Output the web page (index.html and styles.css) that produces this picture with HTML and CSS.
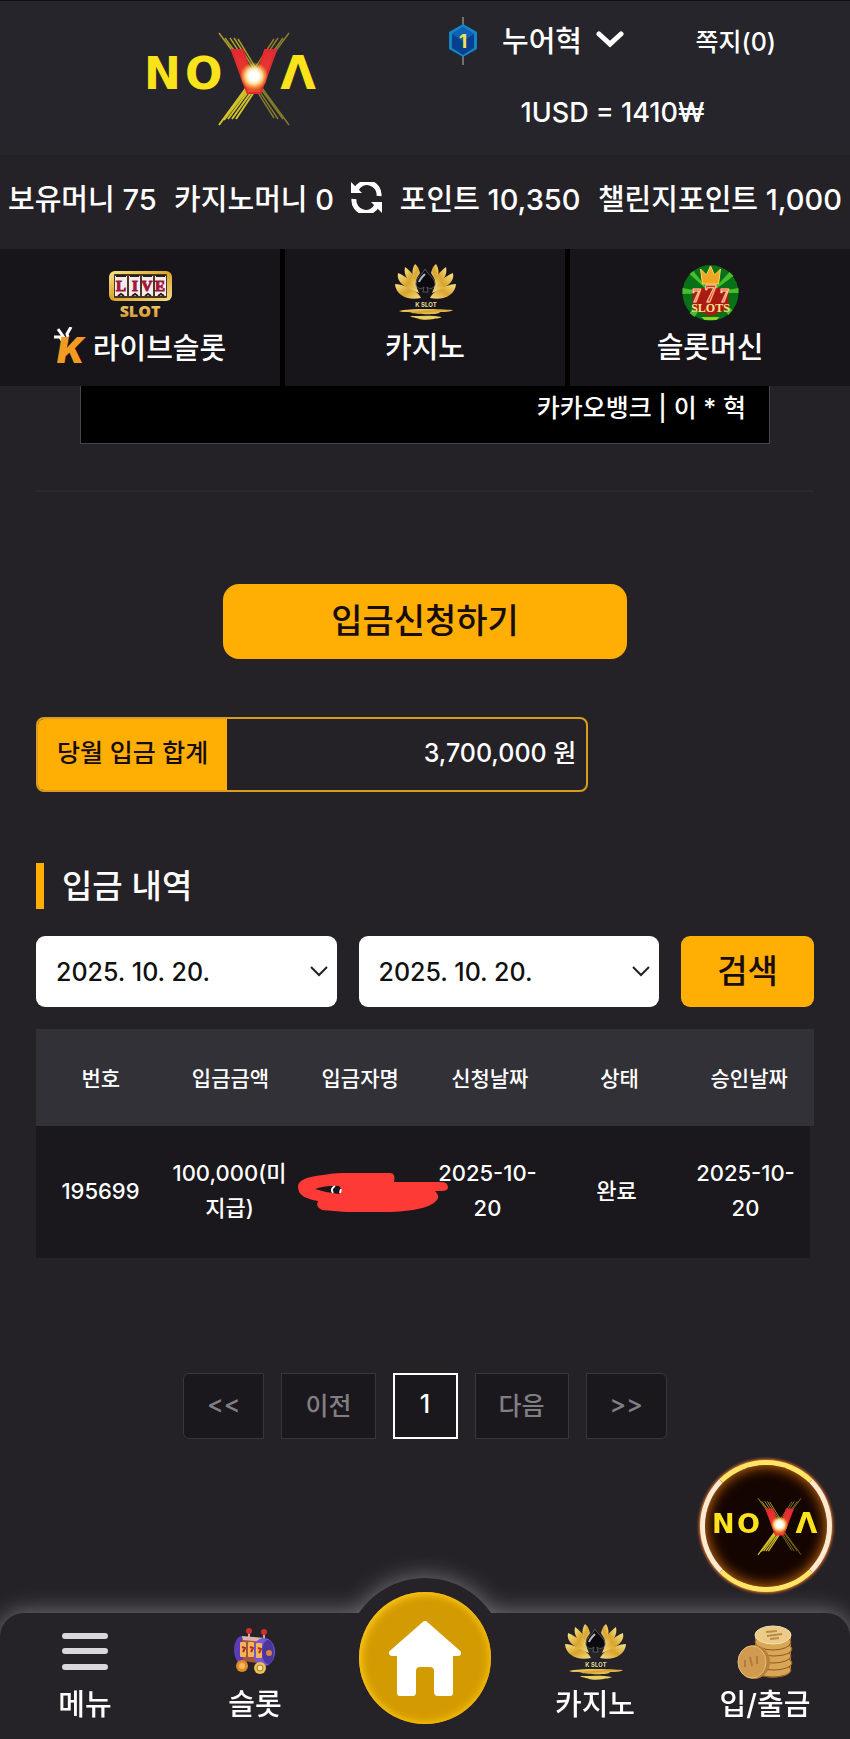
FILE: index.html
```html
<!DOCTYPE html>
<html lang="ko">
<head>
  <meta charset="UTF-8" />
  <meta name="viewport" content="width=device-width, initial-scale=1" />
  <title>NOVA - 입금신청</title>
  <link rel="stylesheet" href="styles.css">
</head>
<body>
  <header class="header">
    <div class="header-top">
      <a href="#" class="logo" aria-label="NOVA">
        <svg viewBox="0 0 172 96">
          <defs>
            <linearGradient id="redDown" x1="0" y1="0" x2="0" y2="1">
              <stop offset="0" stop-color="#e01f35" />
              <stop offset="1" stop-color="#ee5a2a" />
            </linearGradient>
            <radialGradient id="flare">
              <stop offset="0.35" stop-color="#ffffff" />
              <stop offset="0.6" stop-color="#ffe9a0" stop-opacity="0.9" />
              <stop offset="1" stop-color="#ffd400" stop-opacity="0" />
            </radialGradient>
          </defs>
          <g id="logo">
            <g fill="none" stroke="#a89c2c" stroke-width="1.5">
              <path d="M73 2L110 52M79 7L112 52M84 7L114 52M88 7L117 52M92 8L119 52" />
              <path d="M143 2L106 52M137 7L104 52M132 7L102 52M128 8L99 52" opacity="0.75" />
              <path d="M143 94L108 46M137 88L106 46M132 88L104 46M128 87L102 46" opacity="0.7" />
            </g>
            <path d="M73 94L108 46M78 89L111 46M82 88L113 46M86 88L116 46M90 88L118 46" stroke="#d2c22a" stroke-width="2" />
            <g class="logo-text">
              <text x="-2" y="58" font-size="44">N</text>
              <text x="39" y="58" font-size="44">O</text>
              <text x="152" y="58" font-size="46" text-anchor="middle">Λ</text>
              <text x="108" y="62" font-size="58" fill="url(#redDown)" stroke="#e22a32" stroke-width="2" text-anchor="middle">V</text>
            </g>
            <circle cx="108" cy="45" r="14" fill="url(#flare)" />
          </g>
        </svg>
      </a>
      <div class="account">
        <div class="account-row">
          <svg class="badge" viewBox="0 0 28 48" aria-hidden="true">
            <path d="M14 0V48" stroke="#8d8a80" stroke-width="1.5" />
            <path d="M14 7L28 15V32L14 40L0 32V15Z" fill="#1583c4" />
            <path d="M14 10L25 17V31L14 38L3 31V17Z" fill="#06408f" />
            <path d="M14 10L25 17L14 24L3 17Z" fill="#0c63b4" />
            <text x="14" y="31" font-size="19" font-weight="bold" text-anchor="middle" fill="#f7e04a">1</text>
          </svg>
          <button class="user-name">누어혁
            <svg viewBox="0 0 28 17" aria-hidden="true"><path d="M3 3L14 13L25 3" fill="none" stroke="#fff" stroke-width="5" stroke-linecap="round" /></svg>
          </button>
          <a href="#" class="note">쪽지(0)</a>
        </div>
        <p class="rate">1USD = 1410₩</p>
      </div>
    </div>

    <div class="balance">
      <span>보유머니 75</span>
      <span>카지노머니 0</span>
      <button aria-label="새로고침">
        <svg viewBox="0 0 31 31" aria-hidden="true">
          <g id="arrow">
            <path d="M0 0V11H11Z" fill="#fff" />
            <path d="M5 8A12 12 0 0 1 28 14" fill="none" stroke="#fff" stroke-width="5" />
          </g>
          <use href="#arrow" transform="rotate(180 15.5 15.5)" />
        </svg>
      </button>
      <span>포인트 10,350</span>
      <span>챌린지포인트 1,000</span>
    </div>

    <nav class="games">
      <a href="#">
        <svg class="live-icon" viewBox="0 0 63 47" aria-hidden="true">
          <defs>
            <linearGradient id="goldDown" x1="0" y1="0" x2="0" y2="1">
              <stop offset="0" stop-color="#f7d978" />
              <stop offset="1" stop-color="#d08a24" />
            </linearGradient>
          </defs>
          <rect width="63" height="30" rx="6" fill="url(#gold)" />
          <rect x="5" y="3" width="53" height="24" rx="1" fill="#4a3523" />
          <g fill="#f3ecec">
            <rect x="6" y="5" width="12" height="20" /><rect x="20" y="5" width="11" height="20" />
            <rect x="33" y="5" width="11" height="20" /><rect x="46" y="5" width="11" height="20" />
          </g>
          <path d="M7 5H17M21 5H30M34 5H43M47 5H56M9 25L12 23L15 25M23 25L26 23L29 25M36 25L39 23L42 25M49 25L52 23L55 25" fill="none" stroke="#2b1d18" stroke-width="2" />
          <g class="live-text">
            <text x="12" y="20">L</text><text x="26" y="20">I</text><text x="38" y="20">V</text><text x="51" y="20">E</text>
          </g>
          <text x="31" y="46" class="slot-text">SLOT</text>
        </svg>
        <span>
          <svg class="k-icon" viewBox="0 0 35 37" aria-hidden="true">
            <path d="M0 10L6 10L9 15M4 2L11 12M17 0L13 7L14 10" fill="none" stroke="#fff" stroke-width="3" />
            <text x="3" y="36" font-size="36" font-weight="900" font-style="italic" fill="#f39a20">K</text>
          </svg>라이브슬롯
        </span>
      </a>
      <a href="#">
        <svg class="lotus-icon" viewBox="0 0 61 58" aria-hidden="true">
          <defs>
            <linearGradient id="gold" x1="0" y1="0" x2="1" y2="1">
              <stop offset="0" stop-color="#f6e58a" />
              <stop offset="0.5" stop-color="#d9a32c" />
              <stop offset="1" stop-color="#f3e08a" />
            </linearGradient>
          </defs>
          <g id="lotus">
            <g id="petals" fill="url(#gold)">
              <path d="M0 20C1 31 12 37 26 34C23 27 12 21 0 20Z" />
              <path d="M3 9C1 18 9 23 24 29C21 19 12 13 3 9Z" />
              <path d="M10 3C8 12 14 18 22 24C23 15 17 8 10 3Z" />
              <path d="M20 0C16 6 17 13 21 18C21 14 24 11 25 9C24 5 23 2 20 0Z" />
            </g>
            <use href="#petals" transform="matrix(-1 0 0 1 61 0)" />
            <path d="M30 5C27 11 21 14 21 20C21 24 26 26 29 23L28 28H33L32 23C35 26 40 24 40 20C40 14 33 11 30 5Z" fill="#0b0b0f" stroke="#55555d" stroke-width="1" />
            <path d="M24 18C25 15 28 12 30 10" stroke="#b8b8c4" stroke-width="2" fill="none" />
            <text x="31" y="43" class="lotus-text">K SLOT</text>
            <path d="M4 47C15 44 46 45 58 46C54 49 44 47 44 49C40 51 20 50 17 49C16 47 8 49 4 47Z" fill="url(#gold)" />
            <path d="M15 52C26 52 38 51 47 53C44 55 40 54 39 55C34 56 27 56 24 55C24 54 18 54 15 52Z" fill="#e8cf60" />
          </g>
        </svg>
        <span>카지노</span>
      </a>
      <a href="#">
        <svg class="lotus-icon" viewBox="0 0 58 58" aria-hidden="true">
          <circle cx="29" cy="29" r="28" fill="#087016" />
          <path d="M29 29L8 10L12 7ZM29 29L1 24L1 30ZM29 29L48 8L52 12ZM29 29L57 24V29ZM29 29L8 49L13 53ZM29 29L47 51L51 46Z" fill="#49bd2c" />
          <path d="M21 20L19 5L25 11L29 2L33 11L39 5L37 20Z" fill="#f2a423" stroke="#ffd85a" stroke-width="1" />
          <path d="M11 24H47V45L29 52L11 45Z" fill="#a91b12" />
          <g class="seven-text">
            <text x="15" y="38" font-size="18">7</text><text x="43" y="38" font-size="18">7</text>
            <text x="29" y="38" font-size="25">7</text>
          </g>
          <text x="29" y="48" class="slots-text">SLOTS</text>
          <path d="M20 53H38L35 56H23Z" fill="#8ed02b" />
        </svg>
        <span>슬롯머신</span>
      </a>
    </nav>
  </header>

  <main>
    <div class="bank-box">카카오뱅크 | 이 * 혁</div>
    <hr>

    <button class="deposit-btn">입금신청하기</button>

    <dl class="month-total">
      <dt>당월 입금 합계</dt>
      <dd>3,700,000 원</dd>
    </dl>

    <h2>입금 내역</h2>

    <form class="search">
      <label class="date">
        <input type="text" value="2025. 10. 20." aria-label="시작일">
        <svg viewBox="0 0 18 11" aria-hidden="true"><path d="M1 1L9 9L17 1" /></svg>
      </label>
      <label class="date">
        <input type="text" value="2025. 10. 20." aria-label="종료일">
        <svg viewBox="0 0 18 11" aria-hidden="true"><path d="M1 1L9 9L17 1" /></svg>
      </label>
      <button type="button">검색</button>
    </form>

    <table>
      <thead>
        <tr><th>번호</th><th>입금금액</th><th>입금자명</th><th>신청날짜</th><th>상태</th><th>승인날짜</th></tr>
      </thead>
      <tbody>
        <tr>
          <td>195699</td>
          <td>100,000(미지급)</td>
          <td class="masked">
            <svg viewBox="0 0 150 40" aria-hidden="true">
              <path d="M0 14C0 7 8 4 25 2Q35 0 45 0H92Q98 0 96 9H144Q150 9 150 15Q149 18 144 18H137Q141 22 140 25C137 33 120 38 92 39H48L24 37Q17 34 20 28C9 26 0 23 0 14Z" fill="#fd3a36" />
              <path d="M17 16Q30 12 41 13L44 17L41 21Q29 20 17 16Z" fill="#1a171b" />
              <path d="M37 13Q32 16 35 20M43 16L42 20" fill="none" stroke="#fff" stroke-width="2" />
            </svg>
          </td>
          <td>2025-10-<wbr>20</td>
          <td>완료</td>
          <td>2025-10-<wbr>20</td>
        </tr>
      </tbody>
    </table>

    <div class="pages">
      <button>&lt;&lt;</button>
      <button>이전</button>
      <button class="active">1</button>
      <button>다음</button>
      <button>&gt;&gt;</button>
    </div>
  </main>

  <a href="#" class="floating" aria-label="NOVA"><svg viewBox="0 0 172 96"><use href="#logo" /></svg></a>

  <nav class="bottom-nav">
    <a href="#">
      <svg viewBox="0 0 56 56" aria-hidden="true"><path d="M8 12H48M8 27H48M8 43H48" stroke="#d9d6dd" stroke-width="6" stroke-linecap="round" /></svg>
      <span>메뉴</span>
    </a>
    <a href="#">
      <svg viewBox="0 0 56 56" aria-hidden="true">
        <path d="M22 8V18M37 9V19" stroke="#c9a9a0" stroke-width="2" />
        <circle cx="22" cy="7" r="3" fill="#cf2f2c" /><circle cx="37" cy="8" r="3" fill="#cf2f2c" />
        <ellipse cx="15" cy="26" rx="8" ry="14" fill="#5b3bb8" />
        <path d="M15 13L37 15V40L16 37Z" fill="#a4553c" />
        <path d="M15 12L38 14V18L16 16Z" fill="#d8b5b0" />
        <ellipse cx="37" cy="28" rx="11" ry="14" fill="#7458d4" />
        <ellipse cx="41" cy="28" rx="6" ry="12" fill="#4b35a0" />
        <circle cx="42" cy="29" r="3" fill="#d9823a" />
        <g fill="#f4b45c"><rect x="13" y="18" width="6" height="15" rx="1" /><rect x="21" y="18" width="6" height="15" rx="1" /><rect x="29" y="19" width="6" height="15" rx="1" /></g>
        <path d="M15 23L18 24L16 28M23 23L26 24L24 28M31 24L34 25L32 29" fill="none" stroke="#a8301f" stroke-width="2" />
        <circle cx="15" cy="42" r="6" fill="#e08a2c" /><circle cx="15" cy="42" r="3" fill="#f5b95e" />
        <circle cx="33" cy="44" r="6" fill="#f0bf52" /><circle cx="33" cy="44" r="3" fill="#fbe9a6" stroke="#a97724" />
      </svg>
      <span>슬롯</span>
    </a>
    <a href="#" class="home" aria-label="홈">
      <span class="home-circle">
        <svg viewBox="0 0 74 75" aria-hidden="true">
          <path d="M37 3L4 32H70Z" fill="#fff" stroke="#fff" stroke-width="6" stroke-linejoin="round" />
          <path d="M9 30H65V72Q65 75 62 75H50Q46 75 46 71V50Q46 46 42 46H32Q28 46 28 50V71Q28 75 25 75H12Q9 75 9 72Z" fill="#fff" />
        </svg>
      </span>
    </a>
    <a href="#">
      <svg class="lotus-icon" viewBox="0 0 61 56" aria-hidden="true"><use href="#lotus" /></svg>
      <span>카지노</span>
    </a>
    <a href="#">
      <svg viewBox="0 0 56 56" aria-hidden="true">
        <path d="M18 10V46C18 56 54 56 54 46V10Z" fill="#c48a3c" />
        <g fill="#d9a655" stroke="#8a5a24" stroke-width="1">
          <ellipse cx="36" cy="46" rx="18" ry="7" /><ellipse cx="37" cy="39" rx="18" ry="7" />
          <ellipse cx="36" cy="32" rx="18" ry="7" /><ellipse cx="37" cy="25" rx="18" ry="7" />
          <ellipse cx="36" cy="18" rx="18" ry="8" />
        </g>
        <ellipse cx="36" cy="11" rx="18" ry="9" fill="#ecca88" stroke="#f6e2b0" stroke-width="1" />
        <path d="M29 8L40 7M30 12L45 10M33 15L42 14" stroke="#b98b45" stroke-width="2" />
        <ellipse cx="17" cy="38" rx="16" ry="17" fill="#b9803a" />
        <ellipse cx="15" cy="38" rx="14" ry="16" fill="#d09a50" stroke="#e6bd7c" stroke-width="1" />
        <path d="M8 36V43M13 33L15 42M20 32V40" fill="none" stroke="#b07c3e" stroke-width="2" />
      </svg>
      <span>입/출금</span>
    </a>
  </nav>
</body>
</html>
```

FILE: styles.css
```css
* {
  margin: 0;
  padding: 0;
  box-sizing: border-box;
}

body {
  display: flex;
  flex-direction: column;
  min-height: 100vh;
  background: #252227;
  color: #fff;
  font-family: Inter, 'Noto Sans CJK KR', sans-serif;
  font-weight: 500;
  font-size: 25px;
}

a {
  color: inherit;
  text-decoration: none;
}

button,
input {
  border: none;
  background: none;
  color: inherit;
  font: inherit;
}

button {
  cursor: pointer;
}

svg {
  display: block;
  flex: none;
}

.logo-text {
  fill: #fbe31c;
  font-family: 'DejaVu Sans', sans-serif;
  font-weight: bold;
}

.lotus-text {
  font-size: 6px;
  font-weight: bold;
  text-anchor: middle;
  fill: #e6dca0;
}

/* header */
.header-top {
  display: flex;
  align-items: flex-start;
  height: 155px;
  padding-left: 146px;
  background: #26252b;
  border-top: 1px solid #111014;
}

.logo svg {
  width: 172px;
  height: 96px;
  margin-top: 30px;
}

.account {
  flex: 1;
  padding: 16px 74px 0 131px;
}

.account-row {
  display: flex;
  align-items: center;
  height: 48px;
}

.badge {
  width: 28px;
  height: 48px;
}

.user-name {
  display: flex;
  align-items: center;
  gap: 14px;
  margin-left: 25px;
  padding-bottom: 4px;
  font-size: 29px;
}

.user-name svg {
  width: 28px;
  height: 17px;
}

.note {
  margin-left: auto;
  padding-bottom: 3px;
}

.rate {
  margin-top: 32px;
  font-size: 27px;
  line-height: 32px;
  text-align: center;
}

.balance {
  display: flex;
  align-items: center;
  justify-content: space-between;
  height: 94px;
  padding: 0 8px 10px;
  font-size: 29px;
  white-space: nowrap;
}

.balance svg {
  width: 31px;
  height: 31px;
}

.games {
  display: grid;
  grid-template-columns: repeat(3, 1fr);
  gap: 5px;
  background: #000;
}

.games a {
  display: flex;
  flex-direction: column;
  align-items: center;
  height: 137px;
  padding-top: 15px;
  background: #17141a;
  font-size: 29px;
  line-height: 42px;
}

.games a > span {
  display: flex;
  align-items: center;
  gap: 4px;
  margin-top: 5px;
}

.live-icon {
  width: 63px;
  height: 47px;
  margin: 7px 0 4px;
}

.lotus-icon {
  width: 61px;
  height: 58px;
}

.k-icon {
  width: 35px;
  height: 37px;
  margin-bottom: 6px;
}

.live-text {
  font-family: 'Liberation Serif', serif;
  font-size: 15px;
  font-weight: bold;
  text-anchor: middle;
  fill: #a3163a;
  stroke: #a3163a;
}

.slot-text {
  font-family: 'Open Sans', sans-serif;
  font-size: 16px;
  font-weight: 800;
  text-anchor: middle;
  fill: url(#goldDown);
}

.seven-text {
  font-family: 'Liberation Serif', serif;
  font-weight: bold;
  text-anchor: middle;
  fill: #e02818;
  stroke: #ffd9a0;
}

.slots-text {
  font-family: 'Liberation Serif', serif;
  font-size: 12px;
  font-weight: bold;
  text-anchor: middle;
  fill: #ffe08a;
}

/* content */
main {
  padding: 0 36px;
}

.bank-box {
  height: 58px;
  margin: 0 44px;
  padding: 0 23px;
  border: 1px solid #48464b;
  border-top: none;
  background: #000;
  line-height: 44px;
  text-align: right;
}

hr {
  margin: 46px 0 92px;
  border: none;
  border-top: 2px solid #2a292e;
}

.deposit-btn {
  display: block;
  width: 52%;
  height: 75px;
  margin: 0 auto 58px;
  padding-bottom: 6px;
  border-radius: 16px;
  background: #ffae04;
  color: #180c0c;
  font-size: 34px;
}

.month-total {
  display: flex;
  width: 71%;
  height: 75px;
  margin-bottom: 71px;
  border: 2px solid #d99c1c;
  border-radius: 8px;
  overflow: hidden;
  line-height: 69px;
}

.month-total dt {
  padding: 0 19px;
  background: #ffae04;
  color: #180c0c;
}

.month-total dd {
  flex: 1;
  padding-right: 10px;
  text-align: right;
}

h2 {
  margin-bottom: 27px;
  padding-left: 18px;
  border-left: 8px solid #ffae04;
  font-size: 33px;
  font-weight: 500;
  line-height: 46px;
}

.search {
  display: flex;
  gap: 22px;
  height: 71px;
  margin-bottom: 22px;
}

.date {
  display: flex;
  flex: 1;
  align-items: center;
  min-width: 0;
  padding: 0 9px 0 20px;
  border-radius: 9px;
  background: #fff;
}

.date input {
  flex: 1;
  min-width: 0;
  color: #111;
}

.date svg {
  width: 18px;
  height: 11px;
  fill: none;
  stroke: #222;
  stroke-width: 2;
}

.search button {
  width: 133px;
  padding-bottom: 6px;
  border-radius: 9px;
  background: #ffae04;
  color: #180c0c;
  font-size: 33px;
}

table,
thead,
tbody {
  display: block;
}

tr {
  display: table;
  width: 100%;
  table-layout: fixed;
  border-spacing: 0;
}

thead {
  background: #323138;
}

th {
  height: 97px;
  padding-bottom: 2px;
  font-size: 21px;
  font-weight: 500;
}

tbody {
  margin-right: 4px;
  background: #1a171d;
}

td {
  height: 132px;
  padding: 0 4px 2px;
  font-size: 22px;
  line-height: 35px;
  text-align: center;
}

.masked {
  position: relative;
}

.masked svg {
  position: absolute;
  top: 47px;
  left: 4px;
  width: 150px;
  height: 40px;
}

.pages {
  display: flex;
  justify-content: center;
  gap: 17px;
  margin: 115px 0 174px;
}

.pages button {
  min-width: 65px;
  height: 66px;
  padding: 0 23px 4px;
  border: 1px solid #38363b;
  background: #1a171d;
  color: #817f84;
}

.pages button:first-child {
  border-radius: 6px 0 0 6px;
}

.pages button:last-child {
  border-radius: 0 6px 6px 0;
}

.pages .active {
  border: 2px solid #fff;
  color: #fff;
}

/* round shortcut above the bottom bar */
.floating {
  position: fixed;
  right: 18px;
  bottom: 147px;
  z-index: 2;
  display: flex;
  align-items: center;
  justify-content: center;
  width: 132px;
  height: 132px;
  border: 5px solid #fff0b4;
  border-color: #ffe566 #ffe9d0;
  border-radius: 50%;
  background: #150500;
  box-shadow: inset 0 0 14px #e87a10, 0 0 3px 1px #e8762a;
}

.floating svg {
  width: 106px;
  height: 59px;
}

.bottom-nav {
  position: sticky;
  bottom: 0;
  display: grid;
  grid-template-columns: repeat(5, 1fr);
  height: 126px;
  margin-top: auto;
  border-radius: 24px 24px 0 0;
  background: #252327;
  filter: drop-shadow(0 0 12px rgba(255, 255, 255, 0.4));
}

.bottom-nav a {
  display: flex;
  flex-direction: column;
  align-items: center;
  padding-top: 11px;
  font-size: 29px;
  line-height: 42px;
}

.bottom-nav svg {
  width: 56px;
  height: 56px;
  margin-bottom: 4px;
}

.bottom-nav .lotus-icon {
  width: 61px;
}

/* home button rises over the bar */
.bottom-nav .home {
  position: absolute;
  top: -35px;
  left: 50%;
  width: 160px;
  height: 160px;
  margin-left: -80px;
  padding-top: 14px;
  border-radius: 50%;
  background: #252327;
}

.home + a {
  grid-column: 4;
}

.home-circle {
  display: flex;
  align-items: center;
  justify-content: center;
  width: 132px;
  height: 132px;
  border-radius: 50%;
  background: #d39b02;
  box-shadow: inset 2px 2px 8px #ffcc1a, inset -2px -2px 8px #f0b400;
}

.home-circle svg {
  width: 74px;
  height: 75px;
  margin: 0;
}
```
